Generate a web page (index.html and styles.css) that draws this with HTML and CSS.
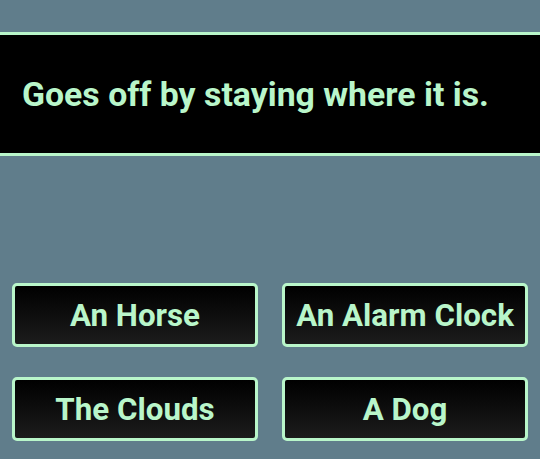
FILE: index.html
```html
<!DOCTYPE html>
<html>
<head>
<meta charset="utf-8">
<link rel="stylesheet" href="styles.css">
</head>
<body>
<div class="question">Goes off by staying where it is.</div>
<div class="answers">
  <button class="answer">An Horse</button>
  <button class="answer">An Alarm Clock</button>
  <button class="answer">The Clouds</button>
  <button class="answer">A Dog</button>
</div>
</body>
</html>
```
FILE: styles.css
```css
html, body {
  margin: 0;
  padding: 0;
}
body {
  background: #607d8b;
  font-family: Roboto, "Liberation Sans", sans-serif;
  width: 540px;
  height: 459px;
  overflow: hidden;
}
.question {
  margin-top: 32px;
  height: 118px;
  background: #000;
  border-top: 3px solid #b9f6ca;
  border-bottom: 3px solid #b9f6ca;
  color: #b9f6ca;
  font-weight: 700;
  font-size: 33.8px;
  display: flex;
  align-items: center;
  padding-left: 22px;
}
.answers {
  margin-top: 127px;
  padding: 0 12px;
  display: grid;
  grid-template-columns: 1fr 1fr;
  column-gap: 24px;
  row-gap: 30px;
}
.answer {
  height: 64px;
  box-sizing: border-box;
  border: 3px solid #b9f6ca;
  border-radius: 5px;
  background: linear-gradient(to bottom, #000 0%, #1c1c1c 100%);
  color: #b9f6ca;
  font-family: Roboto, "Liberation Sans", sans-serif;
  font-weight: 700;
  font-size: 31.3px;
  padding: 0;
  display: flex;
  align-items: center;
  justify-content: center;
}
```
